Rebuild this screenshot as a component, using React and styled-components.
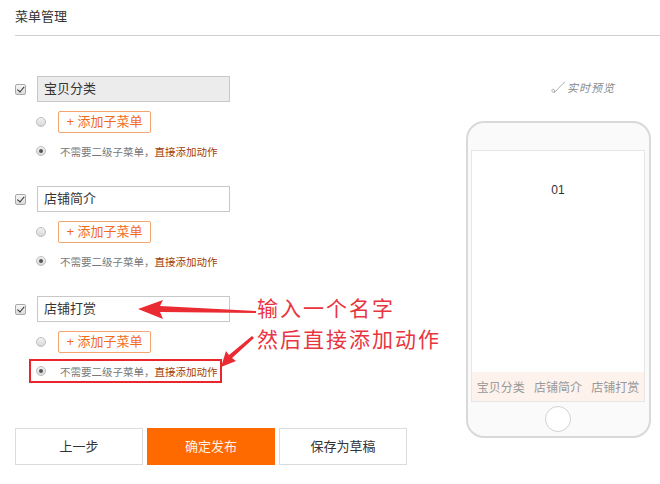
import React from 'react';
import styled, { createGlobalStyle } from 'styled-components';

const GlobalStyle = createGlobalStyle`
  html, body {
    margin: 0;
    padding: 0;
    background: #fff;
  }
  body {
    font-family: "Liberation Sans", "Noto Sans CJK SC", sans-serif;
    color: #333;
  }
`;

const Page = styled.div`
  position: relative;
  width: 660px;
  height: 484px;
  overflow: hidden;
`;

const Header = styled.div`
  margin-left: 15px;
  padding-top: 8px;
  border-bottom: 1px solid #cfcfcf;
`;

const Title = styled.div`
  font-size: 13px;
  line-height: 18px;
  height: 27px;
  color: #333;
`;

const Main = styled.div`
  display: flex;
  margin-top: 40px;
`;

const LeftCol = styled.div`
  flex: 0 0 451px;
  padding-left: 15px;
`;

const Group = styled.div`
  display: flex;
  flex-direction: column;
  margin-bottom: 23px;
`;

const InputRow = styled.div`
  display: flex;
  align-items: center;
  height: 26px;
  margin-bottom: 9px;
`;

const Check = styled.span`
  position: relative;
  box-sizing: border-box;
  width: 11px;
  height: 11px;
  margin-right: 11px;
  border: 1px solid #a8a8a8;
  border-radius: 2px;
  background: linear-gradient(#f6f6f6, #dcdcdc);
  &:after {
    content: '';
    position: absolute;
    left: 3px;
    top: 0px;
    width: 2.5px;
    height: 5.5px;
    border: solid #333;
    border-width: 0 1.6px 1.6px 0;
    transform: rotate(40deg);
  }
`;

const NameInput = styled.div`
  box-sizing: border-box;
  width: 193px;
  height: 26px;
  border: 1px solid #c8c8c8;
  background: ${({ $grey }) => ($grey ? '#ececec' : '#fff')};
  padding-left: 6px;
  font-size: 13px;
  line-height: 24px;
  color: #333;
`;

const SubRow = styled.div`
  display: flex;
  align-items: center;
  height: 22px;
  padding-left: 21px;
  margin-bottom: 6px;
`;

const Radio = styled.span`
  position: relative;
  box-sizing: border-box;
  width: 10px;
  height: 10px;
  border-radius: 50%;
  border: 1px solid #bdbdbd;
  background: linear-gradient(#f2f2f2, #d8d8d8);
  margin-right: ${({ $gap }) => $gap}px;
  ${({ $on }) =>
    $on &&
    `&:after {
      content: '';
      position: absolute;
      left: 2px;
      top: 2px;
      width: 4px;
      height: 4px;
      border-radius: 50%;
      background: #555;
    }`}
`;

const AddButton = styled.div`
  box-sizing: border-box;
  width: 93px;
  height: 22px;
  border: 1px solid #f4a46c;
  border-radius: 2px;
  color: #f26b1d;
  font-size: 13px;
  line-height: 20px;
  text-align: center;
`;

const DirectRow = styled.div`
  display: flex;
  align-items: center;
  align-self: flex-start;
  box-sizing: border-box;
  height: 24px;
  margin-left: 14px;
  padding: 0 2px 0 5px;
  border: 2px solid ${({ $mark }) => ($mark ? '#e8262c' : 'transparent')};
  font-size: 10.5px;
  color: #777;
  white-space: nowrap;
`;

const Strong = styled.span`
  color: #a33c06;
  font-weight: normal;
`;

const Actions = styled.div`
  display: flex;
  gap: 4px;
  margin-top: 45px;
`;

const ActionButton = styled.div`
  box-sizing: border-box;
  width: 128px;
  height: 37px;
  border: 1px solid ${({ $primary }) => ($primary ? '#ff6a00' : '#dcdcdc')};
  background: ${({ $primary }) => ($primary ? '#ff6a00' : '#fff')};
  color: ${({ $primary }) => ($primary ? '#fff2e6' : '#333')};
  font-size: 13px;
  line-height: 35px;
  text-align: center;
`;

const RightCol = styled.div`
  display: flex;
  flex-direction: column;
  width: 185px;
`;

const PreviewLabel = styled.div`
  display: flex;
  align-items: flex-start;
  height: 45px;
  padding-left: 84px;
  padding-top: 3px;
  box-sizing: border-box;
`;

const LabelText = styled.span`
  font-size: 11px;
  color: #888;
  letter-spacing: 1px;
  font-style: italic;
  margin-left: 1px;
`;

const Phone = styled.div`
  box-sizing: border-box;
  width: 185px;
  height: 317px;
  border: 2px solid #d9d9d9;
  border-radius: 18px;
  background: #fafafa;
  padding: 27px 4px 0 3px;
  display: flex;
  flex-direction: column;
`;

const Screen = styled.div`
  box-sizing: border-box;
  height: 252px;
  border: 1px solid #e6e6e6;
  background: #fff;
  display: flex;
  flex-direction: column;
  align-items: center;
`;

const ScreenText = styled.div`
  margin-top: 32px;
  font-size: 12px;
  line-height: 14px;
  color: #333;
`;

const TabBar = styled.div`
  margin-top: auto;
  align-self: stretch;
  height: 29px;
  background: #fdf2ec;
  display: flex;
  justify-content: space-around;
  align-items: center;
  font-size: 12px;
  color: #999;
`;

const HomeArea = styled.div`
  flex: 1;
  display: flex;
  align-items: center;
  justify-content: center;
`;

const HomeButton = styled.div`
  width: 24px;
  height: 24px;
  border-radius: 50%;
  border: 1px solid #d2d2d2;
  background: #fff;
`;

const Note = styled.div`
  position: absolute;
  left: 257px;
  top: 292px;
  display: flex;
  flex-direction: column;
  font-family: "Noto Sans CJK SC", sans-serif;
  font-size: 21px;
  letter-spacing: 2px;
  line-height: 31px;
  color: #e8353f;
  white-space: nowrap;
`;

const NoteLine = styled.div`
  height: 31px;
`;

const Overlay = styled.svg`
  position: absolute;
  left: 0;
  top: 0;
  pointer-events: none;
`;

const groups = [
  { name: '宝贝分类', grey: true },
  { name: '店铺简介' },
  { name: '店铺打赏', mark: true },
];

function MenuGroup({ name, grey, mark }) {
  return (
    <Group>
      <InputRow>
        <Check />
        <NameInput $grey={grey}>{name}</NameInput>
      </InputRow>
      <SubRow>
        <Radio $gap={12} />
        <AddButton>+ 添加子菜单</AddButton>
      </SubRow>
      <DirectRow $mark={mark}>
        <Radio $on $gap={14} />
        不需要二级子菜单，<Strong>直接添加动作</Strong>
      </DirectRow>
    </Group>
  );
}

export default function App() {
  return (
    <Page>
      <GlobalStyle />
      <Header>
        <Title>菜单管理</Title>
      </Header>
      <Main>
        <LeftCol>
          {groups.map((g) => (
            <MenuGroup key={g.name} {...g} />
          ))}
          <Actions>
            <ActionButton>上一步</ActionButton>
            <ActionButton $primary>确定发布</ActionButton>
            <ActionButton>保存为草稿</ActionButton>
          </Actions>
        </LeftCol>
        <RightCol>
          <PreviewLabel>
            <svg width="16" height="18" viewBox="0 0 16 18">
              <path d="M15 3 C12 5 9 9 6 12 C4 14 1 13 2 11 C3 9 6 11 4 14" fill="none" stroke="#999" strokeWidth="0.8" />
            </svg>
            <LabelText>实时预览</LabelText>
          </PreviewLabel>
          <Phone>
            <Screen>
              <ScreenText>01</ScreenText>
              <TabBar>
                <span>宝贝分类</span>
                <span>店铺简介</span>
                <span>店铺打赏</span>
              </TabBar>
            </Screen>
            <HomeArea>
              <HomeButton />
            </HomeArea>
          </Phone>
        </RightCol>
      </Main>
      <Note>
        <NoteLine>输入一个名字</NoteLine>
        <NoteLine>然后直接添加动作</NoteLine>
      </Note>
      <Overlay width="660" height="484" viewBox="0 0 660 484">
        <polygon points="138,309 163,300 160,306 256,311 256,313 160,312 163,319" fill="#ea2b32" />
        <polygon points="221,367 226,351 229,355 252,336 254,338 232,358 236,361" fill="#ea2b32" />
      </Overlay>
    </Page>
  );
}
